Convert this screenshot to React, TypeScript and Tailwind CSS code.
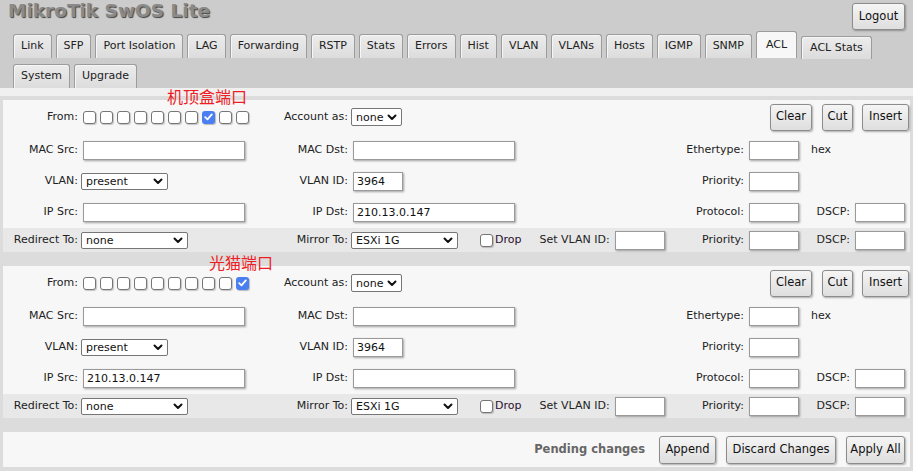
import React from 'react';

const tabsRow1 = ['Link', 'SFP', 'Port Isolation', 'LAG', 'Forwarding', 'RSTP', 'Stats', 'Errors', 'Hist', 'VLAN', 'VLANs', 'Hosts', 'IGMP', 'SNMP'];

const Chevron = () => (
  <svg width="10" height="7" viewBox="0 0 10 7" className="shrink-0">
    <polyline points="1.5,1.5 5,5 8.5,1.5" fill="none" stroke="#111" strokeWidth="2" strokeLinecap="round" strokeLinejoin="round" />
  </svg>
);

const Sel = ({ value, className }: { value: string; className: string }) => (
  <div className={`flex shrink-0 items-center justify-between rounded-[2px] border border-[#767676] bg-white pl-[4px] pr-[4px] text-[#111] ${className}`}>
    <span className="leading-none">{value}</span>
    <Chevron />
  </div>
);

const Inp = ({ value = '', className }: { value?: string; className: string }) => (
  <input
    readOnly
    value={value}
    className={`h-[19px] shrink-0 border border-[#9a9a9a] bg-white px-[3px] text-[11px] text-[#111] shadow-[1px_1px_2px_rgba(0,0,0,0.35)] outline-none ${className}`}
  />
);

const Box = ({ checked = false }: { checked?: boolean }) =>
  checked ? (
    <span className="flex h-[13px] w-[13px] shrink-0 items-center justify-center rounded-[3px] bg-[#4a7ff2] shadow-[1px_1px_1px_rgba(0,0,0,0.25)]">
      <svg width="9" height="8" viewBox="0 0 9 8">
        <polyline points="1.2,4.2 3.5,6.4 7.8,1.4" fill="none" stroke="#fff" strokeWidth="1.8" strokeLinecap="round" strokeLinejoin="round" />
      </svg>
    </span>
  ) : (
    <span className="block h-[13px] w-[13px] shrink-0 rounded-[3px] border border-[#767676] bg-white shadow-[1px_1px_1px_rgba(0,0,0,0.2)]" />
  );

const Btn = ({ children, className = '' }: { children: React.ReactNode; className?: string }) => (
  <button className={`flex items-center justify-center rounded-[3px] border border-[#8c8c8c] bg-gradient-to-b from-[#f5f5f5] to-[#dedede] text-[11.5px] text-[#111] shadow-[1px_1px_2px_rgba(0,0,0,0.3)] ${className}`}>
    {children}
  </button>
);

const Lbl = ({ children, className }: { children: React.ReactNode; className: string }) => (
  <div className={`shrink-0 whitespace-nowrap text-right ${className}`}>{children}</div>
);

const RightGroup = ({ label, hex, dscp }: { label: string; hex?: boolean; dscp?: boolean }) => (
  <div className="ml-auto flex w-[230px] shrink-0 items-center">
    <Lbl className="w-[66px] pr-[2px]">{label}</Lbl>
    <Inp className="ml-[3px] w-[50px]" />
    {hex && <span className="ml-[12px]">hex</span>}
    {dscp && (
      <>
        <Lbl className="ml-[4px] w-[49px] pr-[2px]">DSCP:</Lbl>
        <Inp className="ml-[3px] w-[50px]" />
      </>
    )}
  </div>
);

const Rule = ({ port, ipSrc, ipDst }: { port: number; ipSrc: string; ipDst: string }) => (
  <div>
    <div className="bg-[#f7f7f7]">
      <div className="flex h-[34px] items-center">
        <Lbl className="w-[78px] pr-[3px]">From:</Lbl>
        <div className="flex w-[190px] shrink-0 gap-[4px] pl-[2px]">
          {Array.from({ length: 10 }).map((_, i) => (
            <Box key={i} checked={i === port} />
          ))}
        </div>
        <Lbl className="w-[79px] pr-[2px]">Account as:</Lbl>
        <Sel value="none" className="ml-[1px] h-[18px] w-[51px]" />
        <div className="ml-auto flex h-[27px] pr-[1px]">
          <Btn className="w-[42px]">Clear</Btn>
          <Btn className="ml-[10px] w-[31px]">Cut</Btn>
          <Btn className="ml-[9px] w-[47px]">Insert</Btn>
        </div>
      </div>
      <div className="flex h-[32px] items-center">
        <Lbl className="w-[78px] pr-[3px]">MAC Src:</Lbl>
        <div className="w-[190px] shrink-0">
          <Inp className="ml-[2px] w-[162px]" />
        </div>
        <Lbl className="w-[79px] pr-[2px]">MAC Dst:</Lbl>
        <Inp className="ml-[3px] w-[162px]" />
        <RightGroup label="Ethertype:" hex />
      </div>
      <div className="flex h-[31px] items-center">
        <Lbl className="w-[78px] pr-[3px]">VLAN:</Lbl>
        <div className="w-[190px] shrink-0">
          <Sel value="present" className="h-[17px] w-[87px]" />
        </div>
        <Lbl className="w-[79px] pr-[2px]">VLAN ID:</Lbl>
        <Inp value="3964" className="ml-[3px] w-[50px]" />
        <RightGroup label="Priority:" />
      </div>
      <div className="flex h-[31px] items-center">
        <Lbl className="w-[78px] pr-[3px]">IP Src:</Lbl>
        <div className="w-[190px] shrink-0">
          <Inp value={ipSrc} className="ml-[2px] w-[162px]" />
        </div>
        <Lbl className="w-[79px] pr-[2px]">IP Dst:</Lbl>
        <Inp value={ipDst} className="ml-[3px] w-[162px]" />
        <RightGroup label="Protocol:" dscp />
      </div>
    </div>
    <div className="flex h-[24px] items-center bg-[#e8e8e8]">
      <Lbl className="w-[78px] pr-[3px]">Redirect To:</Lbl>
      <div className="w-[190px] shrink-0">
        <Sel value="none" className="h-[17px] w-[107px]" />
      </div>
      <Lbl className="w-[79px] pr-[2px]">Mirror To:</Lbl>
      <Sel value="ESXi 1G" className="ml-[1px] h-[17px] w-[107px]" />
      <span className="ml-[22px]">
        <Box />
      </span>
      <span className="ml-[2px] text-[#2a1030]">Drop</span>
      <span className="ml-[18px]">Set VLAN ID:</span>
      <Inp className="ml-[5px] w-[50px]" />
      <RightGroup label="Priority:" dscp />
    </div>
  </div>
);

export default function App() {
  return (
    <div className="relative h-[471px] w-[913px] overflow-hidden bg-[#cccccc] font-['DejaVu_Sans',sans-serif] text-[11px] text-[#222]">
      <div className="flex h-[31px] items-start justify-between">
        <div className="pl-[8px] pt-[2px] text-[18.5px] font-bold leading-none text-[#8a8a8a] [text-shadow:1px_1px_1px_#444]">
          MikroTik SwOS Lite
        </div>
        <Btn className="mr-[8px] mt-[3px] h-[27px] w-[53px]">Logout</Btn>
      </div>

      <div className="flex h-[27px] items-end gap-[4px] pl-[13px]">
        {tabsRow1.map((t) => (
          <div key={t} className="flex h-[24px] items-center rounded-t-[3px] border border-b-0 border-[#9c9c9c] bg-gradient-to-b from-[#ececec] to-[#dcdcdc] px-[7px] shadow-[inset_1px_1px_0_#f6f6f6]">
            {t}
          </div>
        ))}
        <div className="flex h-[27px] items-center rounded-t-[3px] border border-b-0 border-[#9c9c9c] bg-[#f7f7f7] px-[9px]">ACL</div>
        <div className="mb-[-1px] flex h-[23px] items-center rounded-t-[3px] border border-b-0 border-[#9c9c9c] bg-gradient-to-b from-[#ececec] to-[#dcdcdc] px-[8px] shadow-[inset_1px_1px_0_#f6f6f6]">
          ACL Stats
        </div>
      </div>
      <div className="mt-[6px] flex h-[24px] items-end gap-[4px] pl-[13px]">
        {['System', 'Upgrade'].map((t) => (
          <div key={t} className="flex h-[24px] items-center rounded-t-[3px] border border-b-0 border-[#9c9c9c] bg-gradient-to-b from-[#ececec] to-[#dcdcdc] px-[7px] shadow-[inset_1px_1px_0_#f6f6f6]">
            {t}
          </div>
        ))}
      </div>

      <div className="h-[8px] bg-[#f0f0f0]" />
      <div className="flex flex-col gap-[14px] bg-[#dcdcdc] px-[3px] pb-[5px] pt-[4px]">
        <Rule port={7} ipSrc="" ipDst="210.13.0.147" />
        <Rule port={9} ipSrc="210.13.0.147" ipDst="" />
        <div className="flex h-[35px] items-center justify-end bg-[#f7f7f7] pr-[5px] pt-[1px]">
          <span className="mr-[14px] text-[11.5px] font-bold text-[#666]">Pending changes</span>
          <div className="flex h-[28px] gap-[10px]">
            <Btn className="w-[57px]">Append</Btn>
            <Btn className="w-[110px]">Discard Changes</Btn>
            <Btn className="w-[59px]">Apply All</Btn>
          </div>
        </div>
      </div>

      <div className="pointer-events-none absolute left-[167px] top-[88px] font-['Noto_Sans_CJK_SC',sans-serif] text-[16px] leading-none text-[#ee1c24]">
        机顶盒端口
      </div>
      <div className="pointer-events-none absolute left-[209px] top-[254px] font-['Noto_Sans_CJK_SC',sans-serif] text-[16px] leading-none text-[#ee1c24]">
        光猫端口
      </div>
    </div>
  );
}
